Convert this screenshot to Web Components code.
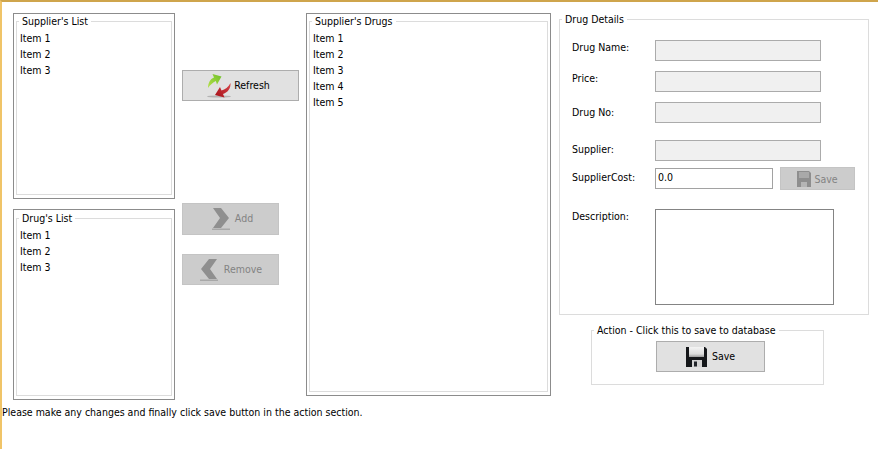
<!DOCTYPE html>
<html>
<head>
<meta charset="utf-8">
<title>Drug Details</title>
<style>
  html, body { margin: 0; padding: 0; background: #fff; }
  body { font: 10.5px/14px "DejaVu Sans Condensed", "DejaVu Sans", sans-serif; color: #000; }
</style>
</head>
<body>
<app-window>
  <div slot="left">
    <list-box legend="Supplier's List" style="height:186px" items="3"></list-box>
    <list-box legend="Drug's List" style="height:191px;margin-top:10px;padding-top:1px" items="3"></list-box>
  </div>
  <div slot="middle">
    <tool-button icon="refresh" style="width:117px;height:31px;margin-top:57px;--icon-gap:2px;padding-right:4px">Refresh</tool-button>
    <tool-button icon="add" disabled style="width:97px;height:32px;margin-top:102px;--icon-gap:3px;padding-left:4px">Add</tool-button>
    <tool-button icon="remove" disabled style="width:97px;height:31px;margin-top:19px">Remove</tool-button>
  </div>
  <list-box slot="drugs" legend="Supplier's Drugs" style="height:383px" items="5"></list-box>
  <drug-details slot="details"></drug-details>
  <group-box slot="action" legend="Action - Click this to save to database" style="width:233px;height:61px">
    <tool-button icon="floppy" style="width:109px;height:31px;margin:4px 0 0 64px;--icon-gap:5px">Save</tool-button>
  </group-box>
  <span slot="status">Please make any changes and finally click save button in the action section.</span>
</app-window>

<script>
// Caja con leyenda, la usan los detalles y la seccion de accion
class GroupBox extends HTMLElement{
    constructor(){
        super();
        this.attachShadow({mode:'open'});
        this.shadowRoot.innerHTML=`<style>
            :host { display:block; box-sizing:border-box; }
            fieldset { box-sizing:border-box; height:100%; margin:0; padding:0; border:1px solid #dcdcdc; min-width:0; }
            legend { padding:0 3px 0 3px; margin-left:2px; line-height:13px; white-space:nowrap; }
        </style>
        <fieldset><legend></legend><slot></slot></fieldset>`;
    }
    connectedCallback(){
        this.shadowRoot.querySelector('legend').textContent=this.getAttribute('legend');
    }
}
customElements.define('group-box',GroupBox);

class ListBox extends HTMLElement{
    constructor(){
        super();
        this.attachShadow({mode:'open'});
        this.shadowRoot.innerHTML=`<style>
            :host { display:block; box-sizing:border-box; border:1px solid #8c8c8c; padding:0 2px 3px 2px; background:#fff; }
            fieldset { box-sizing:border-box; height:100%; margin:0; padding:0; border:1px solid #dcdcdc; min-width:0; }
            legend { padding:0 3px; margin-left:2px; line-height:14px; white-space:nowrap; }
            ul { list-style:none; margin:0; padding:2px 0 0 3px; }
            li { height:16px; line-height:16px; }
        </style>
        <fieldset><legend></legend><ul></ul></fieldset>`;
    }
    connectedCallback(){
        this.shadowRoot.querySelector('legend').textContent=this.getAttribute('legend');
        let n=parseInt(this.getAttribute('items'))||0;
        let ul=this.shadowRoot.querySelector('ul');
        for(let i=1;i<=n;i++){
            let li=document.createElement('li');
            li.textContent='Item '+i;
            ul.appendChild(li);
        }
    }
}
customElements.define('list-box',ListBox);

const ICONS={
    refresh:`<svg width="25" height="25" viewBox="0 0 25 25">
        <defs>
            <linearGradient id="g" x1="0" y1="1" x2="1" y2="0"><stop offset="0" stop-color="#b5e04a"/><stop offset="1" stop-color="#6fc02a"/></linearGradient>
            <linearGradient id="r" x1="1" y1="0" x2="0" y2="1"><stop offset="0" stop-color="#d8454a"/><stop offset="1" stop-color="#a50f18"/></linearGradient>
        </defs>
        <ellipse cx="12" cy="23.500" rx="12" ry="1" fill="#b4b4b4"/>
        <path d="M1 15C1 10 3 6 7 4.500L5.500 1 14.500 3.500 10 11.500 8.800 8C6 9.500 3 12 1 15Z" fill="url(#g)"/>
        <path d="M23.500 10C24 15 21 19.500 16 21L17.500 24.500 8 22 13 14 14.500 17.500C18 16.500 21.500 14 23.500 10Z" fill="url(#r)"/>
    </svg>`,
    add:`<svg width="20" height="24" viewBox="0 0 20 24">
        <path d="M1 1H9L17 11 9 21H1L8 11Z" fill="#8f8f8f"/>
        <rect x="0" y="21.500" width="18" height="1.500" fill="#a8a8a8"/>
    </svg>`,
    remove:`<svg width="20" height="24" viewBox="0 0 20 24">
        <path d="M18 1H10L2 11 10 21H18L11 11Z" fill="#8f8f8f"/>
        <rect x="1" y="21.500" width="18" height="1.500" fill="#a8a8a8"/>
    </svg>`,
    floppy:`<svg width="21" height="21" viewBox="0 0 21 21">
        <defs>
            <linearGradient id="l" x1="0" y1="0" x2="0" y2="1"><stop offset="0" stop-color="#f4f4f4"/><stop offset=".7" stop-color="#dcdcdc"/><stop offset="1" stop-color="#9c9c9c"/></linearGradient>
        </defs>
        <path d="M0 1H19L21 3V21H0Z" fill="#15171a"/>
        <rect x="3" y="1" width="15" height="10" fill="url(#l)"/>
        <rect x="6" y="14" width="10" height="7" fill="#d4d4d4"/>
        <rect x="8" y="15.500" width="3" height="5" fill="#22252a"/>
    </svg>`,
    floppyOff:`<svg width="14" height="16" viewBox="0 0 14 16">
        <path d="M0 0H12L14 2V16H0Z" fill="#8e8e8e"/>
        <rect x="2" y="1" width="10" height="6" fill="#a9a9a9"/>
        <rect x="4" y="11" width="6" height="5" fill="#b5b5b5"/>
    </svg>`
};

class ToolButton extends HTMLElement{
    constructor(){
        super();
        this.attachShadow({mode:'open'});
        this.shadowRoot.innerHTML=`<style>
            :host { display:flex; box-sizing:border-box; align-items:center; justify-content:center; gap:var(--icon-gap,5px);
                    background:#e1e1e1; border:1px solid #adadad; }
            :host([disabled]) { background:#cccccc; border-color:#c4c4c4; color:#838383; }
            span { display:flex; }
            #label { margin-bottom:var(--text-lift,2px); }
        </style><span id="icon"></span><span id="label"><slot></slot></span>`;
    }
    connectedCallback(){
        this.shadowRoot.querySelector('#icon').innerHTML=ICONS[this.getAttribute('icon')]||'';
    }
}
customElements.define('tool-button',ToolButton);

// Una fila del formulario: etiqueta + lo que se pase por el slot
class FormRow extends HTMLElement{
    constructor(){
        super();
        this.attachShadow({mode:'open'});
        this.shadowRoot.innerHTML=`<style>
            :host { display:grid; grid-template-columns:83px auto; align-items:start; }
            label { padding-top:var(--label-top,0); }
        </style><label></label><slot></slot>`;
    }
    connectedCallback(){
        this.shadowRoot.querySelector('label').textContent=this.getAttribute('label');
    }
}
customElements.define('form-row',FormRow);

class TextBox extends HTMLElement{
    constructor(){
        super();
        this.attachShadow({mode:'open'});
        this.shadowRoot.innerHTML=`<style>
            :host { display:block; box-sizing:border-box; height:21px; line-height:17px; padding-left:2px;
                    width:166px; border:1px solid #ababab; background:#f0f0f0; }
            :host([editable]) { background:#fff; border-color:#a2a2a2; }
        </style><slot></slot>`;
    }
}
customElements.define('text-box',TextBox);

class DrugDetails extends HTMLElement{
    constructor(){
        super();
        this.attachShadow({mode:'open'});
        this.shadowRoot.innerHTML=`<style>
            :host { display:block; }
            .rows { padding:14px 0 0 12px; }
            form-row + form-row { margin-top:var(--gap,10px); }
            .cost { display:flex; align-items:flex-start; gap:7px; }
            .area { width:179px; height:96px; border-color:#848484; background:#fff; }
            tool-button { width:75px; height:23px; margin-top:-1px; --icon-gap:3px; --text-lift:0px; }
        </style>
        <group-box legend="Drug Details" style="height:302px">
            <div class="rows">
                <form-row label="Drug Name:" style="--label-top:0px"><text-box></text-box></form-row>
                <form-row label="Price:" style="--label-top:0px"><text-box></text-box></form-row>
                <form-row label="Drug No:" style="--label-top:3px"><text-box></text-box></form-row>
                <form-row label="Supplier:" style="--gap:17px;--label-top:2px"><text-box></text-box></form-row>
                <form-row label="SupplierCost:" style="--gap:7px;--label-top:2px">
                    <div class="cost">
                        <text-box editable style="width:118px">0.0</text-box>
                        <tool-button icon="floppyOff" disabled>Save</tool-button>
                    </div>
                </form-row>
                <form-row label="Description:" style="--gap:19px;--label-top:0px"><text-box class="area" editable></text-box></form-row>
            </div>
        </group-box>`;
    }
}
customElements.define('drug-details',DrugDetails);

class AppWindow extends HTMLElement{
    constructor(){
        super();
        this.attachShadow({mode:'open'});
        this.shadowRoot.innerHTML=`<style>
            :host { display:block; box-sizing:border-box; width:878px; height:449px; background:#fff;
                    border-top:2px solid #cfa54c; border-left:2px solid #f0c468; }
            .main { display:flex; padding:11px 0 0 11px; align-items:flex-start; }
            .left { width:162px; }
            .middle { width:117px; margin-left:7px; }
            .drugs { width:245px; margin-left:7px; }
            .right { width:310px; margin-left:8px; }
            .action { margin:9px 0 0 32px; }
            .status { margin:5px 0 0 0; }
        </style>
        <div class="main">
            <div class="left"><slot name="left"></slot></div>
            <div class="middle"><slot name="middle"></slot></div>
            <div class="drugs"><slot name="drugs"></slot></div>
            <div class="right">
                <slot name="details"></slot>
                <div class="action"><slot name="action"></slot></div>
            </div>
        </div>
        <div class="status"><slot name="status"></slot></div>`;
    }
}
customElements.define('app-window',AppWindow);
</script>
</body>
</html>
